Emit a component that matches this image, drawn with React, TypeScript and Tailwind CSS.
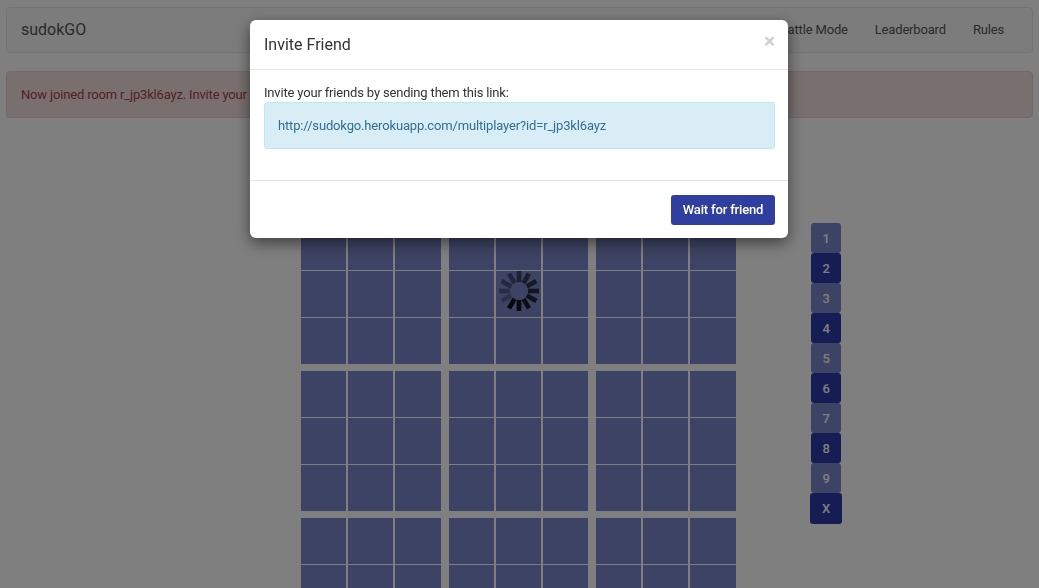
const blocks = [0, 1, 2, 3, 4, 5, 6, 7, 8];
const cells = [0, 1, 2, 3, 4, 5, 6, 7, 8];
const numbers = ["1", "2", "3", "4", "5", "6", "7", "8", "9"];

function Spinner() {
  const spokes = Array.from({ length: 12 }, (_, i) => i);
  return (
    <svg width="42" height="42" viewBox="0 0 42 42" className="absolute left-[197px] top-[46px]">
      {spokes.map((k) => (
        <rect
          key={k}
          x="18.7"
          y="1"
          width="4.6"
          height="11"
          fill="#050608"
          opacity={1 - k * 0.065}
          transform={`rotate(${210 - k * 30} 21 21)`}
        />
      ))}
    </svg>
  );
}

export default function App() {
  return (
    <div className="relative h-screen overflow-hidden bg-white font-['Roboto',sans-serif] text-[13px] tracking-[-0.17px] text-[#333]">
      <div className="px-[6px] pt-[7px]">
        {/* NAVBAR */}
        <nav className="flex h-[46px] items-center justify-between rounded-[4px] border border-[#e7e7e7] bg-[#f8f8f8] pl-[14px] pr-[28px]">
          <span className="text-[16px] tracking-normal text-[#555]">sudokGO</span>
          <ul className="flex items-center gap-[27px] text-[#555]">
            <li>Battle Mode</li>
            <li>Leaderboard</li>
            <li>Rules</li>
          </ul>
        </nav>

        {/* ALERT */}
        <div className="mt-[18px] flex h-[47px] items-center rounded-[4px] border border-[#ebccd1] bg-[#f2dede] pl-[14px] text-[#a94442]">
          Now joined room r_jp3kl6ayz. Invite your friends
        </div>
      </div>

      {/* BOARD */}
      <div className="ml-[301px] mt-[106px] flex items-start">
        <div className="relative grid w-[435px] grid-cols-[140px_139px_140px] gap-x-[8px] gap-y-[7px]">
          {blocks.map((b) => (
            <div
              key={b}
              className={
                b % 3 === 1
                  ? "grid grid-cols-[45px_45px_45px] grid-rows-[46px_46px_46px] gap-x-[2px] gap-y-[1px]"
                  : "grid grid-cols-[45px_45px_46px] grid-rows-[46px_46px_46px] gap-x-[2px] gap-y-[1px]"
              }
            >
              {cells.map((c) => (
                <div key={c} className="bg-[#7a86c8]" />
              ))}
            </div>
          ))}
        </div>

        {/* NUMBER PAD */}
        <div className="ml-[74px] -mt-[1px] flex flex-col items-center">
          {numbers.map((n, i) => (
            <button
              key={n}
              className={
                i % 2 === 0
                  ? "h-[30px] w-[30px] rounded-[3px] bg-[#7a86c8] pt-[1px] text-[13px] font-medium text-white"
                  : "h-[30px] w-[30px] rounded-[3px] bg-[#2c3aaa] pt-[1px] text-[13px] font-medium text-white"
              }
            >
              {n}
            </button>
          ))}
          <button className="h-[31px] w-[32px] rounded-[3px] bg-[#2c3aaa] pt-[1px] text-[13px] font-medium text-white">
            X
          </button>
        </div>
      </div>

      {/* BACKDROP */}
      <div className="fixed inset-0 bg-black/50">
        <div className="relative ml-[301px] mt-[224px] h-[140px] w-[435px]">
          <Spinner />
        </div>
      </div>

      {/* MODAL */}
      <div className="fixed left-[250px] top-[20px] w-[538px] rounded-[6px] bg-white shadow-[0_5px_15px_rgba(0,0,0,0.5)]">
        <div className="flex h-[50px] items-start justify-between border-b border-[#e5e5e5] pl-[14px] pr-[13px]">
          <h4 className="mt-[14px] text-[16px] leading-[22px] tracking-normal text-[#333]">Invite Friend</h4>
          <span className="mt-[11px] text-[21px] font-bold leading-[21px] text-[#cfcfcf]">×</span>
        </div>
        <div className="h-[110px] pl-[14px] pr-[13px] pt-[14px]">
          <p className="h-[18px] leading-[17px] text-[#333]">Invite your friends by sending them this link:</p>
          <div className="flex h-[47px] items-center rounded-[3px] border border-[#bce8f1] bg-[#d9edf7] pl-[13px] tracking-[-0.155px] text-[#31708f]">
            http://sudokgo.herokuapp.com/multiplayer?id=r_jp3kl6ayz
          </div>
        </div>
        <div className="flex h-[58px] items-start justify-end border-t border-[#e5e5e5] pr-[13px] pt-[14px]">
          <button className="h-[30px] w-[104px] rounded-[3px] bg-[#303f9f] font-medium text-white">
            Wait for friend
          </button>
        </div>
      </div>
    </div>
  );
}
